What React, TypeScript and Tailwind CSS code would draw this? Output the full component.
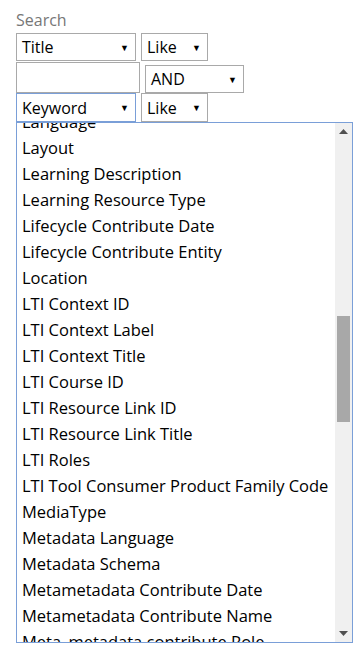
import React from "react";

const items = [
  "Language",
  "Layout",
  "Learning Description",
  "Learning Resource Type",
  "Lifecycle Contribute Date",
  "Lifecycle Contribute Entity",
  "Location",
  "LTI Context ID",
  "LTI Context Label",
  "LTI Context Title",
  "LTI Course ID",
  "LTI Resource Link ID",
  "LTI Resource Link Title",
  "LTI Roles",
  "LTI Tool Consumer Product Family Code",
  "MediaType",
  "Metadata Language",
  "Metadata Schema",
  "Metametadata Contribute Date",
  "Metametadata Contribute Name",
  "Meta_metadata contribute Role",
];

function Sel({ label, w, h, focus }: { label: string; w: string; h: string; focus?: boolean }) {
  return (
    <div
      className={`${w} ${h} flex items-center justify-between pl-[5px] pr-[6px] border bg-white text-[16px] text-black ${
        focus ? "border-[#7a9fd8]" : "border-[#a9a9a9]"
      }`}
    >
      <span className="leading-none">{label}</span>
      <span className="text-[9px] leading-none text-black">▼</span>
    </div>
  );
}

export default function App() {
  return (
    <div
      className="w-[355px] h-[672px] bg-white overflow-hidden pl-4"
      style={{ fontFamily: '"Open Sans", sans-serif' }}
    >
      <div className="h-[33px] flex items-center pt-[7px] text-[16px] text-[#777777]">Search</div>
      <div className="flex gap-[5px] h-[29px]">
        <Sel label="Title" w="w-[120px]" h="h-[28px]" />
        <Sel label="Like" w="w-[67px]" h="h-[28px]" />
      </div>
      <div className="flex items-end gap-[5px] h-[31px]">
        <div className="w-[124px] h-[31px] border border-[#a9a9a9] bg-white" />
        <Sel label="AND" w="w-[99px]" h="h-[28px]" />
      </div>
      <div className="flex gap-[5px] h-[29px]">
        <Sel label="Keyword" w="w-[120px]" h="h-[29px]" focus />
        <Sel label="Like" w="w-[67px]" h="h-[29px]" />
      </div>
      <div className="w-[337px] h-[521px] border border-[#7a9fd8] flex bg-white">
        <div className="flex-1 overflow-hidden">
          <div className="mt-[-14px] pl-[5px]">
            {items.map((t) => (
              <div key={t} className="h-[26px] flex items-center text-[16.5px] text-black whitespace-nowrap">
                {t}
              </div>
            ))}
          </div>
        </div>
        <div className="w-[17px] bg-[#f0f0f0] flex flex-col items-center">
          <div className="h-[17px] w-full flex items-center justify-center">
            <svg width="9" height="5" viewBox="0 0 9 5">
              <path d="M0 5 L4.5 0 L9 5 Z" fill="#505050" />
            </svg>
          </div>
          <div className="h-[176px]" />
          <div className="w-[13px] h-[106px] bg-[#a8a8a8]" />
          <div className="flex-1" />
          <div className="h-[17px] w-full flex items-center justify-center">
            <svg width="9" height="5" viewBox="0 0 9 5">
              <path d="M0 0 L9 0 L4.5 5 Z" fill="#505050" />
            </svg>
          </div>
        </div>
      </div>
    </div>
  );
}
